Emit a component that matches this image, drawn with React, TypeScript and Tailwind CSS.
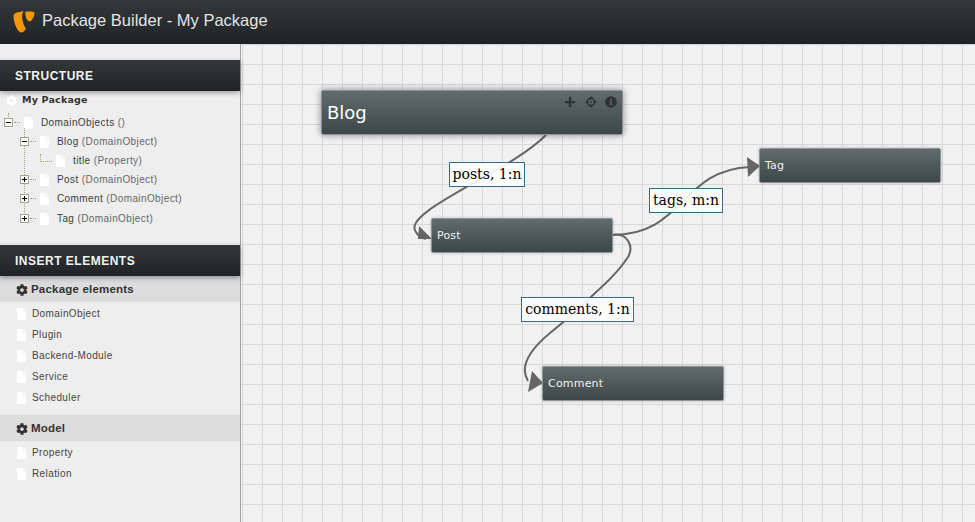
import { FaCog, FaInfoCircle, FaPlus } from 'react-icons/fa';

const sans = "font-['DejaVu_Sans',sans-serif]";
const arial = "font-['Liberation_Sans',sans-serif]";

function PageIcon() {
  return (
    <svg width="9" height="12" viewBox="0 0 9 12" className="shrink-0">
      <path d="M0 0H5.5V3.5H9V12H0Z" fill="#fff" />
      <path d="M6.5 0L9 2.5H6.5Z" fill="#fff" />
    </svg>
  );
}

function Expander({ open }: { open: boolean }) {
  return (
    <span className="relative z-10 flex h-[9px] w-[9px] shrink-0 items-center justify-center border border-[#a3a68c] bg-white">
      <span className="absolute h-px w-[5px] bg-black" />
      {!open && <span className="absolute h-[5px] w-px bg-black" />}
    </span>
  );
}

function TreeRow({ label, type, open, indent }: { label: string; type: string; open: boolean; indent: string }) {
  return (
    <div className={`flex h-[19px] items-center ${indent}`}>
      <Expander open={open} />
      <span className="ml-px h-0 w-[6px] border-t border-dotted border-[#a3a68c]" />
      <span className="ml-[4px]"><PageIcon /></span>
      <span className={`ml-2 text-[10px] tracking-[0.4px] text-[#3c3c3c] ${arial}`}>
        {label} <span className="text-[#666]">{type}</span>
      </span>
    </div>
  );
}

function BarHeading({ children }: { children: string }) {
  return (
    <div className={`relative z-10 flex h-[31px] items-center bg-gradient-to-b from-[#33383a] to-[#1f2325] pl-[15px] text-[12px] font-bold tracking-[0.5px] text-[#f2f2f2] shadow-[0_2px_5px_rgba(0,0,0,0.35)] ${arial}`}>
      {children}
    </div>
  );
}

function GroupHeading({ children }: { children: string }) {
  return (
    <div className={`flex h-[26px] items-center gap-[3px] bg-[#dcdcdc] pl-[16px] pt-[2px] text-[11.5px] font-bold tracking-[0.2px] text-[#333] ${arial}`}>
      <FaCog className="h-[12px] w-[12px] text-[#333]" />
      {children}
    </div>
  );
}

function InsertItem({ label }: { label: string }) {
  return (
    <div className="flex h-[21px] items-center pl-[17px]">
      <PageIcon />
      <span className={`ml-[6px] text-[10px] tracking-[0.4px] text-[#444] ${arial}`}>{label}</span>
    </div>
  );
}

function Node({ label, className }: { label: string; className: string }) {
  return (
    <div className={`absolute flex h-[35px] w-[182px] items-center rounded-[2px] border border-[#8b9394] bg-gradient-to-b from-[#636c6d] to-[#3d4748] pl-[5px] pt-px text-[11px] tracking-[0.2px] text-[#f0f0f0] shadow-[0_0_3px_rgba(0,0,0,0.25)] ${sans} ${className}`}>
      {label}
    </div>
  );
}

function WireLabel({ label, className }: { label: string; className: string }) {
  return (
    <div className={`absolute flex h-[25px] items-center justify-center border border-[#336a94] bg-white/90 text-[14px] text-black font-['DejaVu_Serif',serif] ${className}`}>
      {label}
    </div>
  );
}

export default function App() {
  return (
    <div className="flex h-[522px] w-[975px] flex-col overflow-hidden bg-[#eee]">
      <header className="flex h-[44px] shrink-0 items-center bg-gradient-to-b from-[#33383a] to-[#1f2325] pl-[13px]">
        <svg width="22" height="22" viewBox="0 0 22 22" className="shrink-0">
          <path d="M0.5 5C0.5 3 2 1.8 4 1.4L10.5 0C9 2.5 8.8 5.5 9.6 9.5C10.4 13.5 11.8 16 13 17.5C11.6 19.9 10 21.5 8.5 21.5C4 21.5 0.5 10.5 0.5 5Z" fill="#f49700" />
          <path d="M12.5 0.5H18.5C20.5 0.5 21.5 1.2 21.5 2.6C21.5 5 18.9 10.5 16.5 10.5C14 10.5 11.8 5 12.5 0.5Z" fill="#f49700" />
        </svg>
        <h1 className={`mb-[4px] ml-[7px] text-[16.5px] font-normal text-[#e4e4e4] ${arial}`}>Package Builder - My Package</h1>
      </header>

      <div className="flex min-h-0 flex-1">
        <aside className="w-[241px] shrink-0 border-r border-[#a3a3a3] bg-[#eee] pt-[16px]">
          <BarHeading>STRUCTURE</BarHeading>
          <div className="flex h-[18px] items-center pl-[6px]">
            <FaCog className="h-[11px] w-[11px] text-white" />
            <span className={`ml-[5px] text-[9.5px] font-bold tracking-[0.2px] text-[#333] ${sans}`}>My Package</span>
          </div>
          <div className="relative mt-[4px]">
            <span className="absolute left-[8px] top-0 h-[4px] border-l border-dotted border-[#a3a68c]" />
            <span className="absolute left-[24px] top-[15px] h-[85px] border-l border-dotted border-[#a3a68c]" />
            <TreeRow label="DomainObjects" type="()" open indent="pl-[4px]" />
            <TreeRow label="Blog" type="(DomainObject)" open indent="pl-[20px]" />
            <div className="flex h-[19px] items-center pl-[40px]">
              <span className="mb-[6px] h-[8px] w-[12px] border-b border-l border-dotted border-[#a3a68c]" />
              <span className="ml-[4px]"><PageIcon /></span>
              <span className={`ml-2 text-[10px] tracking-[0.4px] text-[#3c3c3c] ${arial}`}>title <span className="text-[#666]">(Property)</span></span>
            </div>
            <TreeRow label="Post" type="(DomainObject)" open={false} indent="pl-[20px]" />
            <TreeRow label="Comment" type="(DomainObject)" open={false} indent="pl-[20px]" />
            <div className="pt-px">
              <TreeRow label="Tag" type="(DomainObject)" open={false} indent="pl-[20px]" />
            </div>
          </div>
          <div className="mt-[17px]">
            <BarHeading>INSERT ELEMENTS</BarHeading>
          </div>
          <GroupHeading>Package elements</GroupHeading>
          <div className="pt-px">
            {['DomainObject', 'Plugin', 'Backend-Module', 'Service', 'Scheduler'].map((item) => (
              <InsertItem key={item} label={item} />
            ))}
          </div>
          <div className="mt-[7px]">
            <GroupHeading>Model</GroupHeading>
          </div>
          <div className="pt-px">
            {['Property', 'Relation'].map((item) => (
              <InsertItem key={item} label={item} />
            ))}
          </div>
        </aside>

        <main className="relative flex-1 overflow-hidden bg-[#f1f1f1] bg-[linear-gradient(to_right,#d8d8d8_1px,transparent_1px),linear-gradient(to_bottom,#d8d8d8_1px,transparent_1px)] bg-[size:20px_20px] bg-[position:1px_0px]">
          {/* wires use page coordinates */}
          <svg className="absolute inset-0 h-full w-full" viewBox="241 44 734 478">
            <g fill="none" stroke="#666" strokeWidth="2">
              <path d="M546 135C510 172 400 212 416 232C418 236 422 238 426 239" />
              <path d="M612 235C685 235 680 170 750 167" />
              <path d="M612 235C628 232 634 247 628 257C616 276 602 286 590 298C578 310 566 320 550 333C532 348 518 365 528 381" />
            </g>
            <path d="M419 226L432 239H418Z" fill="#666" />
            <path d="M747 157L760 166L748 177Z" fill="#666" />
            <path d="M532 371L543 383L528 392Z" fill="#666" />
          </svg>

          <div className="absolute left-[80px] top-[46px] flex h-[45px] w-[302px] items-center rounded-[2px] border border-[#8b9394] bg-gradient-to-b from-[#636c6d] to-[#3d4748] pl-[5px] shadow-[0_0_7px_rgba(0,0,0,0.45)]">
            <span className={`text-[18px] text-white ${sans}`}>Blog</span>
            <div className="absolute right-[5px] top-[5px] flex items-center gap-[9px] text-[#2e3435]">
              <FaPlus className="h-[12px] w-[12px]" />
              <svg width="12" height="12" viewBox="0 0 12 12" fill="none" stroke="currentColor">
                <circle cx="6" cy="6" r="3.6" strokeWidth="1.6" />
                <path d="M6 0L7.6 2H4.4ZM6 12L4.4 10H7.6ZM0 6L2 4.4V7.6ZM12 6L10 7.6V4.4Z" fill="currentColor" strokeWidth="0" />
                <circle cx="6" cy="6" r="1" fill="currentColor" strokeWidth="0" />
              </svg>
              <FaInfoCircle className="-ml-px h-[12px] w-[12px]" />
            </div>
          </div>

          <Node label="Post" className="left-[190px] top-[174px]" />
          <Node label="Tag" className="left-[518px] top-[104px]" />
          <Node label="Comment" className="left-[301px] top-[322px]" />

          <WireLabel label="posts, 1:n" className="left-[208px] top-[118px] w-[76px]" />
          <WireLabel label="tags, m:n" className="left-[408px] top-[144px] w-[74px]" />
          <WireLabel label="comments, 1:n" className="left-[280px] top-[253px] w-[113px]" />
        </main>
      </div>
    </div>
  );
}
